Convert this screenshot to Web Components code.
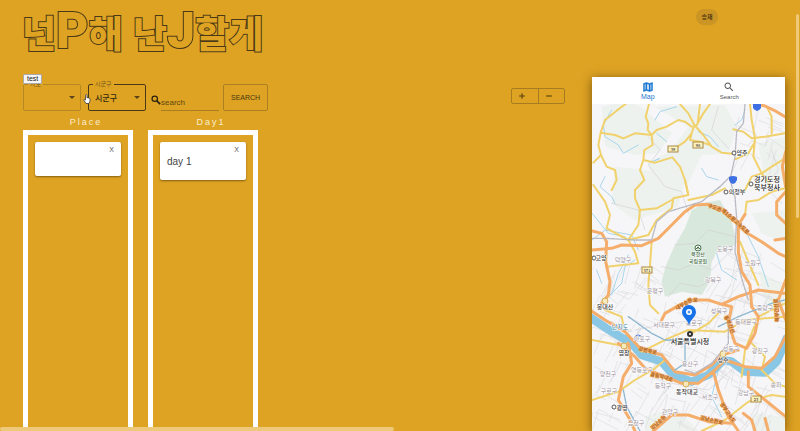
<!DOCTYPE html>
<html lang="ko">
<head>
<meta charset="utf-8">
<title>넌P해 난J할게</title>
<style>
  html, body { margin: 0; height: 100%; }
  body { --bg: #dea323; background: var(--bg); color: #33291a; overflow: hidden;
    font-family: "Liberation Sans", "Noto Sans CJK KR", sans-serif; font-size: 8px; }
</style>
</head>
<body>
<trip-app></trip-app>
<script>
const define = (name, html, setup) => {
  const template = document.createElement('template');
  template.innerHTML = html;
  customElements.define(name, class extends HTMLElement {
    constructor() {
      super();
      this.attachShadow({ mode: 'open' }).append(template.content.cloneNode(true));
    }
    connectedCallback() { if (setup) setup(this, this.shadowRoot); }
  });
};

define('trip-logo', `
<style>
  :host { display: block; }
  h1 { margin: 0; font: 900 37px/56px "Noto Sans CJK KR", sans-serif; white-space: nowrap;
    color: var(--bg); -webkit-text-stroke: 2px #4a3916; paint-order: stroke fill; }
  ::slotted(b) { font: 900 50px/48px Roboto, sans-serif; }
</style>
<h1><slot></slot></h1>`);

define('user-chip', `
<style>
  :host { display: block; }
  button { display: block; border: 0; border-radius: 8px; padding: 0 5px; height: 16px; min-width: 22px;
    background: #ca9525; color: #33270f; font: 500 6px/16px "Noto Sans CJK KR", sans-serif; }
</style>
<button type="button"><slot></slot></button>`);

define('trip-select', `
<style>
  :host { display: block; position: relative; width: 58px; --line: #b58725; }
  :host([active]) { --line: #4a3916; }
  select { appearance: none; display: block; box-sizing: border-box; width: 100%; height: 27px; margin: 0;
    padding: 0 16px 0 6px; border: 1px solid var(--line); border-radius: 2px; background: transparent;
    color: #33270f; font: 500 8px/24px "Noto Sans CJK KR", sans-serif; }
  label { position: absolute; left: 5px; top: -5px; padding: 0 2px; background: var(--bg); color: #755719;
    font: 6px/9px "Noto Sans CJK KR", sans-serif; }
  svg { position: absolute; right: 6px; top: 12px; width: 6px; height: 3px; fill: #594315; pointer-events: none; }
</style>
<select id="field"></select>
<label for="field"></label>
<svg viewBox="0 0 6 3"><path d="M0 0h6L3 3z"/></svg>`, (host, root) => {
  root.querySelector('label').textContent = host.getAttribute('label');
  const option = document.createElement('option');
  option.textContent = host.getAttribute('value') || '';
  root.querySelector('select').replaceChildren(option);
});

define('search-form', `
<style>
  :host { display: block; }
  form { display: flex; align-items: center; gap: 4px; }
  label { display: flex; align-items: center; }
  svg { width: 10px; height: 10px; margin-top: 4px; fill: none; stroke: #2b210e; stroke-width: 3; }
  input { box-sizing: border-box; width: 58px; height: 27px; margin: 0; padding: 11px 0 0; border: 0;
    border-bottom: 1px solid #a87c22; border-radius: 0; background: transparent; outline: 0;
    color: #33270f; font: 8px/15px "Liberation Sans", sans-serif; }
  input::placeholder { color: #624812; opacity: 1; }
  button { height: 27px; box-sizing: border-box; padding: 0 7px; border: 1px solid #ac7f23; border-radius: 2px;
    background: transparent; color: #493611; font: 7px/25px "Liberation Sans", sans-serif; }
</style>
<form>
  <label for="q"><svg viewBox="0 0 24 24" aria-label="Search"><circle cx="9" cy="9" r="6.5"/><path d="M14 14l8 8" stroke-width="4"/></svg>
  <input id="q" type="text" placeholder="search"></label>
  <button type="button">SEARCH</button>
</form>`);

define('day-stepper', `
<style>
  :host { display: flex; width: 54px; height: 16px; box-sizing: border-box; border: 1px solid #a77c21; border-radius: 2px; }
  button { flex: 1; display: grid; place-items: center; padding: 0 5px 0 0; border: 0; background: transparent; }
  button + button { border-left: 1px solid #a77c21; }
  svg { width: 8px; height: 8px; stroke: #594211; stroke-width: 1; }
</style>
<button type="button" aria-label="Add day"><svg viewBox="0 0 7 7"><path d="M1 3.5h5M3.5 1v5"/></svg></button>
<button type="button" aria-label="Remove day"><svg viewBox="0 0 7 7"><path d="M1 3.5h5"/></svg></button>`);

define('plan-card', `
<style>
  :host { display: block; padding: 4px 7px 12px; min-height: 18px; border-radius: 2px; background: #fff;
    color: #444; box-shadow: 0 1px 2px rgba(60,40,0,.55); }
  button { display: block; margin: 0 0 0 auto; padding: 0; border: 0; background: none; color: #555;
    font: 7px/8px "Liberation Sans", sans-serif; }
  p { margin: 1px 0 0; font: 10px/13px "Liberation Sans", sans-serif; }
</style>
<button type="button" aria-label="Remove">X</button>
<p><slot></slot></p>`);

define('plan-column', `
<style>
  :host { display: flex; flex-direction: column; width: 110px; }
  h2 { margin: 0; padding-left: 16px; text-align: center; color: #fbedc9;
    font: 9px/22px "Liberation Sans", sans-serif; height: 19px; letter-spacing: 2px; }
  div { flex: 1; padding: 7px; border: 5px solid #fff; border-bottom: 0; }
</style>
<h2></h2><div><slot></slot></div>`, (host, root) => {
  root.querySelector('h2').textContent = host.getAttribute('heading');
});

define('map-tabs', `
<style>
  :host { display: flex; height: 27px; background: #fff; }
  button { flex: 1; display: flex; flex-direction: column; align-items: center; justify-content: center;
    padding: 0 0 0 15px; border: 0; background: none; color: #555; font: 6px/8px "Liberation Sans", sans-serif; }
  button + button { padding: 0 15px 0 0; }
  button[aria-pressed=true] { color: #1976d2; font-size: 7px; }
  svg { width: 12px; height: 12px; fill: currentColor; stroke: currentColor; }
</style>
<button type="button" aria-pressed="true"><svg viewBox="0 0 24 24"><path fill-rule="evenodd" stroke-width="1" d="M21 3l-6 2-6-2-6 2v16l6-2 6 2 6-2zM10 5.500l4 1.400v11.600l-4-1.400zM5 6.500l2.500-.9v11.600l-2.500.9zM19 17.500l-2.500.9V6.800l2.500-.9z"/></svg>Map</button>
<button type="button"><svg viewBox="0 0 24 24" stroke-width="0"><path d="M15.500 14h-.79l-.28-.27C15.410 12.590 16 11.110 16 9.500 16 5.910 13.090 3 9.500 3S3 5.910 3 9.500 5.910 16 9.500 16c1.610 0 3.090-.59 4.230-1.570l.27.28v.79l5 4.990L20.490 19l-4.990-5zm-6 0C7.010 14 5 11.990 5 9.500S7.010 5 9.500 5 14 7.010 14 9.500 11.990 14 9.500 14z"/></svg>Search</button>`);

define('map-view', `
<style>
  :host { display: block; flex: 1; min-height: 0; overflow: hidden; background: #f6f6f8; }
  svg { display: block; width: 100%; height: 100%; }
  path { fill: none; stroke-linecap: round; stroke-linejoin: round; }
  .land path { fill: #edf2ee; }
  .land .park { fill: #d9e8dc; }
  .streets { stroke: #dddce0; stroke-width: 2; }
  .border { stroke: #cfcdd2; stroke-width: 2; stroke-dasharray: 4 3; }
  .stream { stroke: #a9d5ec; stroke-width: 3; }
  .river { stroke: #8ac7e4; stroke-width: 25; }
  .yellow { stroke: #f1d16c; stroke-width: 6; }
  .orange { stroke: #f5ad6b; stroke-width: 9; }
  .rail { stroke: #b9b9c2; stroke-width: 4; stroke-dasharray: 9 3; }
  .subway { stroke: #8db7cf; stroke-width: 4; stroke-dasharray: 9 3; }
  text { font: 500 6px "Noto Sans CJK KR", sans-serif; text-anchor: middle; fill: #3c3c40;
    stroke: #fff; stroke-width: 1px; paint-order: stroke; }
  .gu text { font-weight: 400; fill: #9d939d; }
  .main { font-size: 7px; fill: #222; font-weight: 500; }
  .park-name { fill: #48724b; font-size: 5px; }
  .water { fill: #4787ac; }
  .road text { font-size: 15px; font-weight: 700; fill: #ad6720; stroke: #f6b273; stroke-width: 3px; text-anchor: start; }
  .shield rect { fill: #fff3bd; stroke: #a88744; stroke-width: 1; }
  .shield text { font-size: 4px; stroke: none; }
  .town circle { fill: #fff; stroke: #555; stroke-width: 1; }
  .station circle { fill: #f6e8b8; stroke: #d5ad58; stroke-width: 1; }
</style>
<svg viewBox="592 104 193 327" preserveAspectRatio="xMidYMin slice" role="img" aria-label="Map">
<g transform="translate(585 70) scale(.333333)">
  <g class="land">
    <path d="M50 110Q150 80 190 130L260 190 220 250 150 255 60 230Z"/>
    <path d="M210 110L420 105 455 170 430 250 350 255 310 340 210 370 190 280 260 240 310 170Z"/>
    <path d="M90 290L180 300 300 330 280 410 150 450 80 400Z"/>
    <path d="M520 220L600 200V330L540 340ZM500 430L600 420V520L530 490Z"/>
    <path d="M180 1040L270 1010 340 1083H180ZM520 600L600 650 590 750 540 700ZM500 1030L600 1040V1083H500Z"/>
    <path class="park" d="M320 420L360 398 405 390 440 455 455 515 440 535 395 545 380 575 375 635 350 675 290 665 240 680 230 635 243 585 270 525 300 475Z"/>
  </g>
  <path class="streets"/>
  <path class="border" d="M230 590L280 600 330 580 380 600 440 540M270 525L330 520 370 480 450 500M250 680L285 640 340 650 375 635M190 200L225 240 190 285 240 350 290 365 310 430M400 110L380 180 430 235M80 400L160 420 180 480M560 240L580 300 540 350 590 400M150 780L230 765 330 750 400 790M220 990L260 940 370 960 440 900"/>
  <path class="stream" d="M80 120L55 165 60 200 100 225 115 250 160 225M210 150L225 125 275 110M215 190L245 215M340 185L375 200 400 230M480 120L470 150 450 165M60 320L45 350 80 380 90 400M210 272L225 265 200 275M21 430L70 490 120 500M350 295L365 320 400 330M21 510L60 480 140 495 160 540M60 690L110 640 120 590 150 570M130 555L100 610 80 675M35 600L50 640M395 550L410 600 455 630M480 480L520 560 550 650M400 900L380 980 410 1040"/>
  <path class="river" d="M15 742L80 785 140 820 170 855 230 875 265 915 320 935 370 915 415 870 440 875 480 905 540 908 575 875 605 805"/>
  <g class="yellow">
    <path d="M122 102L95 122 60 150 47 188 40 225 48 255 25 278M47 188L90 195 115 205 150 190 200 195M192 102L182 140 190 160 188 180 200 195 203 225 178 240 175 270M200 195L215 180 245 170 280 150 300 155 320 170M285 102L310 130 328 165 320 190 300 215 262 240M375 102L355 130 335 165M345 102L338 160M328 165L355 195 380 230 410 248 450 252M320 190L315 210 345 215 375 225M175 270L210 278 262 262 285 290 300 330 310 375M175 270L165 300 178 330 150 360 150 385 165 420M48 255L65 290 90 300 95 330 80 360"/>
    <path d="M445 178L475 185 500 205 540 200 600 190M495 102L500 150 510 205 505 260 530 310 560 350M545 110L560 140 560 190M450 268L490 250 510 215M600 265L560 290 530 310 500 320 480 360"/>
    <path d="M25 345L60 395 75 435 65 475 130 510 150 545 160 580 65 590M130 510L190 495 215 450 260 415 265 385 310 375 300 330M165 420L215 415 260 390M165 420L160 465 130 510M200 515L195 585 190 645 195 705 220 730M465 515L490 575 520 645M480 435L485 395 520 390 560 365 600 355M310 390L380 375 420 355"/>
    <path d="M21 810L100 825 130 820M170 845L250 805 310 780 420 785 480 750 600 740M470 920L480 840 520 740 600 700M21 990L100 965 150 930 210 895 240 870M350 1083L420 1050 490 995 560 975 600 980M500 820L540 860 530 900 570 940 600 950M60 720L110 740 115 765M70 680L40 710 75 720M320 790L370 760 400 730"/>
  </g>
  <g class="orange">
    <path d="M500 98L540 108 575 125 600 140M602 245L592 290 602 350M21 540L80 535 110 525 170 527 220 505 260 465 300 425 330 405 370 403 410 420 440 445 480 485 530 515 580 550 602 560M21 483L50 490 65 515 62 575 75 635 70 675 50 700M480 433L460 465 460 545 470 605 495 645 500 710M602 365L575 395 575 435 602 460M602 505L570 510"/>
    <path d="M230 750L240 730 275 710 320 690 370 690 410 703 460 680 520 660 560 665 602 670M15 720L60 750 120 785 165 835 230 855 270 905 330 915 380 885 410 855 460 840M100 820L150 860 180 895 240 920 290 940 340 940 390 900 420 870 480 890 530 895 570 860 602 800M130 820L140 880 115 920 100 990 130 1040 150 1083M410 703L440 710 430 760 450 820 485 835 510 790 520 740 500 710M385 905L400 960 430 1040 460 1083M490 905L490 950 540 990 602 1040M205 1083L260 1035 310 1035 370 1055 440 1060M475 1030L500 1050 510 1083M602 630L580 690 602 750M540 1045L550 1083"/>
  </g>
  <path class="rail" d="M480 102L475 160 455 185 450 260 435 330 450 380 455 445 450 545 470 625 490 690M410 345L350 395 250 425 215 455 200 510 150 510 60 505 21 505M435 320L400 355M300 900L330 910 380 880 430 820 430 760"/>
  <path class="subway" d="M130 740L200 790 240 810 300 810 300 880 270 900M115 960L125 1010 165 1083M400 770L460 740 560 700 600 690"/>
  <g class="road">
    <path id="r1" d="M368 411L410 425 440 450 500 505"/><path id="r2" d="M160 840L230 858 280 905"/>
    <path id="r3" d="M195 917L240 928 300 948"/><path id="r4" d="M275 720L320 695 380 697"/>
    <path id="r5" d="M405 1002L430 1040 460 1083"/><path id="r6" d="M345 1048L440 1070"/>
    <path id="r7" d="M417 740L430 765 450 825"/><path id="r8" d="M582 755L578 690 590 640"/><path id="r9" d="M203 1080L248 1040"/>
    <text><textPath href="#r1">수도권제1순환고속도로</textPath></text>
    <text><textPath href="#r2">강변북로</textPath></text>
    <text><textPath href="#r3">올림픽대로</textPath></text>
    <text><textPath href="#r4">내부순환로</textPath></text>
    <text><textPath href="#r5">경부고속도</textPath></text>
    <text><textPath href="#r6">강남순환로</textPath></text>
    <text><textPath href="#r7">동부간선</textPath></text>
    <text><textPath href="#r8">북부간선로</textPath></text>
    <text><textPath href="#r9">강남순환</textPath></text>
  </g>
</g>
<g class="shield">
  <rect x="668" y="146" width="10" height="6"/><text x="673" y="151">39</text>
  <rect x="693" y="142" width="10" height="6"/><text x="698" y="147">98</text>
  <rect x="642" y="267" width="10" height="6"/><text x="647" y="272">371</text>
  <rect x="751" y="396" width="10" height="6"/><text x="756" y="401">23</text>
</g>
<path style="fill:#3f70e3" d="M753 104h8v4q-1 2-4 3-3-1-4-3zM729 177q4-2 8 0v3q-1 3-4 4-3-1-4-4z"/>
<path style="stroke:#4d78dd;stroke-width:2" d="M635 338q3-5 7 0"/>
<g class="town"><circle cx="734" cy="153" r="2"/><circle cx="751" cy="184" r="2"/><circle cx="726" cy="192" r="2"/><circle cx="594" cy="258" r="2"/><circle cx="614" cy="407" r="2"/><circle cx="690" cy="334" r="2" style="stroke-width:2;stroke:#333"/></g>
<g class="station"><circle cx="605" cy="301" r="3"/><circle cx="624" cy="346" r="3"/><circle cx="723" cy="354" r="3"/><circle cx="686" cy="384" r="3"/></g>
<g fill="#fff" stroke="#48724b"><circle cx="698" cy="248" r="3"/><path d="M698 249v-2M696 249l2-2 2 2" style="stroke-width:1"/></g>
<g class="gu">
  <text x="623" y="262">덕양구</text><text x="725" y="251">도봉구</text><text x="753" y="265">노원구</text><text x="713" y="282">강북구</text>
  <text x="655" y="293">은평구</text><text x="664" y="327">서대문구</text><text x="719" y="313">성북구</text><text x="746" y="324">동대문구</text>
  <text x="765" y="310">중랑구</text><text x="694" y="325">종로구</text><text x="642" y="341">마포구</text><text x="731" y="351">성동구</text>
  <text x="760" y="353">광진구</text><text x="690" y="366">용산구</text><text x="608" y="376">양천구</text><text x="642" y="372">영등포구</text>
  <text x="663" y="388">동작구</text><text x="710" y="399">서초구</text><text x="746" y="395">강남구</text><text x="776" y="387">송파</text>
  <text x="609" y="393">구로구</text><text x="636" y="425">금천구</text><text x="670" y="414">관악구</text>
</g>
<text x="742" y="155">양주</text><text x="767" y="182" class="main">경기도청</text><text x="767" y="190" class="main">북부청사</text>
<text x="737" y="194">의정부</text><text x="601" y="260">고양</text><text x="622" y="410">광명</text>
<text x="698" y="256" class="park-name">북한산</text><text x="698" y="263" class="park-name">국립공원</text>
<text x="605" y="309">봉대산</text><text x="620" y="329" class="water">난지도</text><text x="624" y="355">염창</text><text x="723" y="362">성수</text>
<text x="687" y="394">동작대교</text><text x="690" y="344" class="main">서울특별시청</text>
<path style="fill:#1873e8" d="M689 325C688 320 682 317 682 312a7 7 0 0 1 14 0C696 317 690 320 689 325Z"/>
<circle cx="689" cy="312" r="3" fill="#fff"/><path style="stroke:#1873e8;stroke-width:1" d="M689 311v2M688 312h2"/>
</svg>`, (host, root) => {
  let seed = 7;
  const random = () => (seed = (seed * 16807) % 2147483647) / 2147483647;
  let d = '';
  const grid = (x, y, w, h, count) => {
    for (let i = 0; i < count; i++) {
      const tilt = random() < .5 ? .2 : 1.75, angle = tilt + random() * .5, length = 25 + random() * 60;
      d += `M${Math.round(x + random() * w)} ${Math.round(y + random() * h)}l${Math.round(Math.cos(angle) * length)} ${Math.round(Math.sin(angle) * length)}`;
    }
  };
  grid(21, 690, 560, 370, 190);
  grid(380, 540, 180, 150, 35);
  grid(21, 580, 180, 110, 25);
  grid(460, 110, 120, 150, 20);
  root.querySelector('.streets').setAttribute('d', d);
});

define('map-panel', `
<style>
  :host { display: flex; flex-direction: column; min-height: 0; background: #fff; box-shadow: 0 2px 10px rgba(80,50,0,.7); }
</style>
<map-tabs></map-tabs><map-view></map-view>`);

define('trip-app', `
<style>
  :host { display: flex; flex-direction: column; height: 100vh; position: relative; overflow: hidden; }
  header { display: flex; align-items: flex-start; justify-content: space-between; height: 72px; padding: 4px 82px 0 22px; box-sizing: border-box; flex: none; }
  user-chip { margin-top: 5px; }
  .body { flex: 1; min-height: 0; display: grid; grid-template-columns: minmax(0, 542fr) minmax(0, 193fr); gap: 27px; padding: 5px 15px 0 23px; }
  main { display: flex; flex-direction: column; min-height: 0; padding-top: 7px; }
  .tools { display: flex; gap: 7px; align-items: flex-start; position: relative; }
  search-form { margin-left: -2px; }
  day-stepper { margin: 4px 0 0 auto; }
  .columns { flex: 1; display: flex; gap: 15px; }
  .test { position: absolute; left: 0; top: -10px; height: 10px; padding: 0 3px; border: 1px solid #aaa; border-radius: 1px;
    background: #f5f5f5; color: #222; font: 7px/8px "Liberation Sans", sans-serif; }
  .hand { position: absolute; left: 60px; top: 10px; width: 8px; height: 10px; }
  .bar { position: absolute; background: #eec979; border-radius: 2px; }
  .v { right: 1px; top: 14px; width: 3px; height: 204px; }
  .h { left: 0; bottom: 0; width: 394px; height: 4px; }
</style>
<header><trip-logo>넌<b>P</b>해 난<b>J</b>할게</trip-logo><user-chip>승재</user-chip></header>
<div class="body">
  <main>
    <div class="tools">
      <trip-select label="시도"></trip-select>
      <trip-select label="시군구" value="시군구" active></trip-select>
      <search-form></search-form>
      <day-stepper></day-stepper>
      <button type="button" class="test">test</button>
      <svg class="hand" viewBox="0 0 16 20" fill="#fff" stroke="#333" stroke-width="1.500"><path d="M5 12V3q0-2 1.500-2T8 3v5q1-1 2 0 1-1 2 .5 2-.5 2 1.500v4l-2 5H6l-4-6q-1-2 .5-2z"/></svg>
    </div>
    <div class="columns">
      <plan-column heading="Place"><plan-card></plan-card></plan-column>
      <plan-column heading="Day1"><plan-card>day 1</plan-card></plan-column>
    </div>
  </main>
  <map-panel></map-panel>
</div>
<div class="bar v"></div><div class="bar h"></div>`);
</script>
</body>
</html>
